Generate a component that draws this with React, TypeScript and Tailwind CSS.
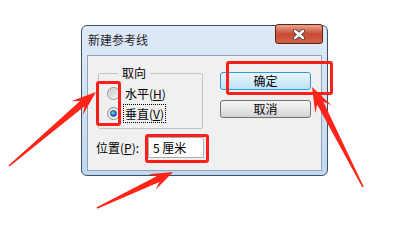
type Pt = [number, number];

// tapered annotation arrow, tail -> tip
function arrowPoints(tail: Pt, tip: Pt, headLen = 20, headW = 8, neckW = 3) {
  const dx = tip[0] - tail[0];
  const dy = tip[1] - tail[1];
  const len = Math.hypot(dx, dy);
  const ux = dx / len;
  const uy = dy / len;
  const nx = -uy;
  const ny = ux;
  const at = (d: number, s: number): Pt => [tip[0] - ux * d + nx * s, tip[1] - uy * d + ny * s];
  const pts: Pt[] = [
    [tail[0] + nx * 0.8, tail[1] + ny * 0.8],
    at(headLen * 0.72, neckW),
    at(headLen, headW),
    tip,
    at(headLen, -headW),
    at(headLen * 0.72, -neckW),
    [tail[0] - nx * 0.8, tail[1] - ny * 0.8],
  ];
  return pts.map((p) => p.join(',')).join(' ');
}

function Radio({ checked }: { checked?: boolean }) {
  return (
    <div className="w-[13px] h-[13px] rounded-full border border-[#8e8f8f] bg-gradient-to-br from-[#dcdcdc] to-[#fbfbfb] flex items-center justify-center shrink-0">
      {checked ? (
        <div className="w-[7px] h-[7px] rounded-full border border-[#1c4e85] bg-[radial-gradient(circle_at_40%_35%,#8ad0ff,#1f74c9_60%,#0d3f78)]" />
      ) : (
        <div className="w-[9px] h-[9px] rounded-full bg-gradient-to-br from-[#c8c8c8] to-[#f4f4f4]" />
      )}
    </div>
  );
}

export default function App() {
  return (
    <div className="relative w-[416px] h-[229px] bg-white overflow-hidden font-['Noto_Sans_CJK_SC',sans-serif] text-[12px] text-black">
      <div className="pl-[81px] pt-[25px]">
        <div className="w-[247px] h-[151px] rounded-[6px] border border-[#3f4f63] bg-gradient-to-b from-[#dfeaf7] to-[#c2d8f0] flex flex-col">
          <div className="h-[29px] flex items-start justify-between">
            <span className="pl-[6px] pt-[6px] leading-[16px] text-[#1e1e1e]">新建参考线</span>
            <div className="-mt-[2px] mr-[4px] w-[48px] h-[20px] rounded-[3px] border border-[#5b2417] bg-gradient-to-b from-[#eba390] via-[#c94a33] to-[#d0624a] flex items-center justify-center">
              <svg width="14" height="11" viewBox="0 0 14 11">
                <path d="M3 2 L11 9 M11 2 L3 9" stroke="#3b3b3b" strokeWidth="4.2" strokeLinecap="round" />
                <path d="M3 2 L11 9 M11 2 L3 9" stroke="#ffffff" strokeWidth="2.6" strokeLinecap="round" />
              </svg>
            </div>
          </div>
          <div className="mx-[5px] mb-[4px] flex-1 border border-[#8ea3bb] bg-[#f0f0f0] flex">
            <div className="ml-[8px] flex flex-col">
              <fieldset className="ml-[2px] mt-[9px] w-[105px] border border-[#c3c3c3] rounded-[2px] pb-[5px]">
                <legend className="ml-[19px] px-[4px] leading-[16px]">取向</legend>
                <div className="mt-[2px] pl-[8px] flex flex-col">
                  <div className="h-[20px] flex items-center">
                    <Radio />
                    <span className="ml-[3px] px-[1px] border border-transparent leading-[17px]">
                      水平(<span className="underline">H</span>)
                    </span>
                  </div>
                  <div className="h-[20px] flex items-center">
                    <Radio checked />
                    <span className="ml-[3px] px-[1px] border border-dotted border-black leading-[17px]">
                      垂直(<span className="underline">V</span>)
                    </span>
                  </div>
                </div>
              </fieldset>
              <div className="mt-[8px] h-[21px] flex items-center">
                <span className="w-[52px]">
                  位置(<span className="underline">P</span>):
                </span>
                <div className="w-[56px] h-[21px] border border-[#abadb3] bg-white pl-[4px] flex items-center">5 厘米</div>
              </div>
            </div>
            <div className="ml-[16px] mt-[16px] flex flex-col">
              <div className="w-[91px] h-[18px] rounded-[3px] border border-[#3399dd] bg-gradient-to-b from-[#eaf6fd] to-[#bfe3f7] flex items-center justify-center leading-none">
                确定
              </div>
              <div className="mt-[10px] w-[91px] h-[18px] rounded-[3px] border border-[#707070] bg-gradient-to-b from-[#f4f4f4] via-[#e8e8e8] to-[#d2d2d2] flex items-center justify-center leading-none">
                取消
              </div>
            </div>
          </div>
        </div>
      </div>

      {/* annotation overlay */}
      <div className="absolute left-[96px] top-[81px] w-[25px] h-[45px] border-[3px] border-[#ff1f1a] rounded-[3px]" />
      <div className="absolute left-[226px] top-[61px] w-[107px] h-[34px] border-[3px] border-[#ff1f1a] rounded-[3px]" />
      <div className="absolute left-[145px] top-[134px] w-[64px] h-[29px] border-[3px] border-[#ff1f1a] rounded-[3px]" />
      <svg className="absolute left-0 top-0" width="416" height="229">
        <polygon points={arrowPoints([9, 166], [96, 92], 25, 9, 3.4)} fill="#ff2418" />
        <polygon points={arrowPoints([97, 208], [173, 172], 23, 8.5, 3.2)} fill="#ff2418" />
        <polygon points={arrowPoints([363, 187], [312, 87], 25, 9, 3.4)} fill="#ff2418" />
      </svg>
    </div>
  );
}
